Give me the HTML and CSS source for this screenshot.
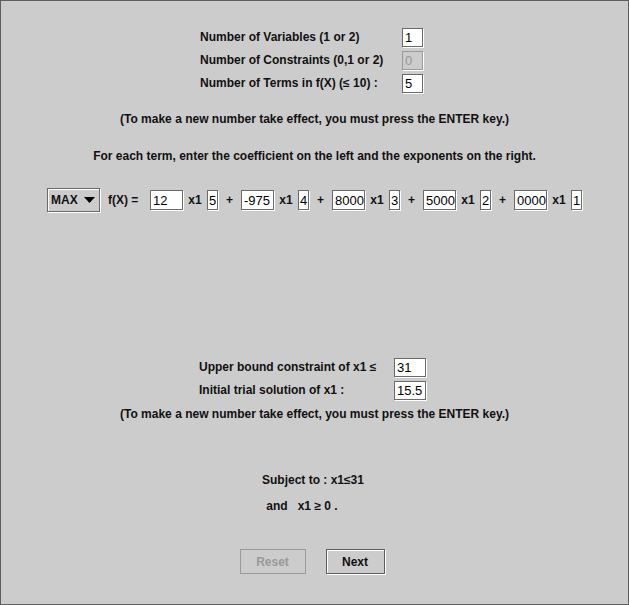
FILE: index.html
```html
<!DOCTYPE html>
<html>
<head>
<meta charset="utf-8">
<link rel="stylesheet" href="styles.css">
</head>
<body>
<div class="frame">
  <div class="group top-group">
    <span class="lbl">Number of Variables (1 or 2)</span><span class="field f21">1</span>
    <span class="lbl">Number of Constraints (0,1 or 2)</span><span class="field f21 disabled">0</span>
    <span class="lbl">Number of Terms in f(X) (≤ 10) :</span><span class="field f21">5</span>
  </div>
  <div class="note note1">(To make a new number take effect, you must press the ENTER key.)</div>
  <div class="note note2">For each term, enter the coefficient on the left and the exponents on the right.</div>
  <div class="terms">
    <div class="combo"><span>MAX</span><svg class="arrow" width="11" height="6" viewBox="0 0 11 6"><path d="M0 0H11L5.5 6Z" fill="#000"/></svg></div>
    <span class="fx">f(X) =</span>
    <span class="field coef">12</span><span class="x1">x1</span><span class="field expo">5</span><span class="plus">+</span>
    <span class="field coef">-975</span><span class="x1">x1</span><span class="field expo">4</span><span class="plus">+</span>
    <span class="field coef">8000</span><span class="x1">x1</span><span class="field expo">3</span><span class="plus">+</span>
    <span class="field coef">5000</span><span class="x1">x1</span><span class="field expo">2</span><span class="plus">+</span>
    <span class="field coef">0000</span><span class="x1">x1</span><span class="field expo">1</span>
  </div>
  <div class="group low-group">
    <span class="lbl">Upper bound constraint of x1 ≤</span><span class="field f32">31</span>
    <span class="lbl">Initial trial solution of x1 :</span><span class="field f32">15.5</span>
  </div>
  <div class="note note3">(To make a new number take effect, you must press the ENTER key.)</div>
  <div class="note subject">Subject to : x1≤31</div>
  <div class="note andline">and &nbsp;&nbsp;x1 ≥ 0 .</div>
  <div class="buttons">
    <span class="btn reset">Reset</span>
    <span class="btn next">Next</span>
  </div>
</div>
</body>
</html>
```
FILE: styles.css
```css
html, body {
  margin: 0;
  padding: 0;
  background: #cccccc;
}
.frame {
  box-sizing: border-box;
  width: 629px;
  height: 605px;
  border: 1px solid #5e5e5e;
  background: #cccccc;
  padding-top: 26px;
  display: flex;
  flex-direction: column;
  align-items: center;
  font-family: "Liberation Sans", Arial, sans-serif;
  font-weight: bold;
  font-size: 12px;
  color: #111;
  letter-spacing: 0;
}
.group {
  display: grid;
  row-gap: 3px;
  align-items: center;
}
.top-group {
  grid-template-columns: 202px 22px;
  grid-auto-rows: 20px;
  margin-right: 5px;
}
.low-group {
  grid-template-columns: 195px 33px;
  grid-auto-rows: 20px;
  margin-top: 145px;
  margin-right: 3px;
}
.lbl {
  white-space: nowrap;
}
.field {
  box-sizing: border-box;
  display: inline-flex;
  align-items: center;
  height: 19px;
  background: #fff;
  border: 1px solid #6a6a6a;
  box-shadow: 1px 1px 0 #fff;
  font-weight: normal;
  font-size: 13px;
  letter-spacing: 0;
  padding-left: 2px;
  color: #000;
}
.f21 { width: 21px; }
.f32 { width: 32px; }
.field.disabled {
  background: #cccccc;
  border-color: #9a9a9a;
  color: #999;
}
.note {
  height: 16px;
  line-height: 16px;
  white-space: nowrap;
}
.note1 { margin-top: 18px; }
.note2 { margin-top: 21px; }
.terms {
  margin-top: 24px;
  height: 24px;
  display: flex;
  align-items: center;
}
.combo {
  box-sizing: border-box;
  width: 53px;
  height: 24px;
  border: 1px solid #6a6a6a;
  box-shadow: inset 1px 1px 0 #fff, 1px 1px 0 #fff;
  display: flex;
  align-items: center;
  justify-content: space-between;
  padding: 0 4px 0 3px;
}
.arrow { display: block; }
.fx {
  width: 50px;
  padding-left: 8px;
  box-sizing: border-box;
}
.coef {
  width: 33px;
  height: 20px;
}
.expo {
  width: 11px;
  height: 20px;
  padding-left: 1px;
}
.x1 {
  width: 24px;
  text-align: center;
}
.plus {
  width: 23px;
  text-align: center;
}
.note3 { margin-top: 6px; }
.subject { margin-top: 50px; margin-left: -3px; }
.andline { margin-top: 10px; margin-left: -25px; }
.buttons {
  margin-top: 35px;
  display: flex;
  gap: 20px;
  margin-right: 5px;
}
.btn {
  box-sizing: border-box;
  height: 25px;
  display: flex;
  align-items: center;
  justify-content: center;
}
.reset {
  width: 66px;
  border: 1px solid #9a9a9a;
  color: #999;
}
.next {
  width: 59px;
  border: 1px solid #5e5e5e;
  box-shadow: inset 1px 1px 0 #fff, 1px 1px 0 #fff;
}
```
